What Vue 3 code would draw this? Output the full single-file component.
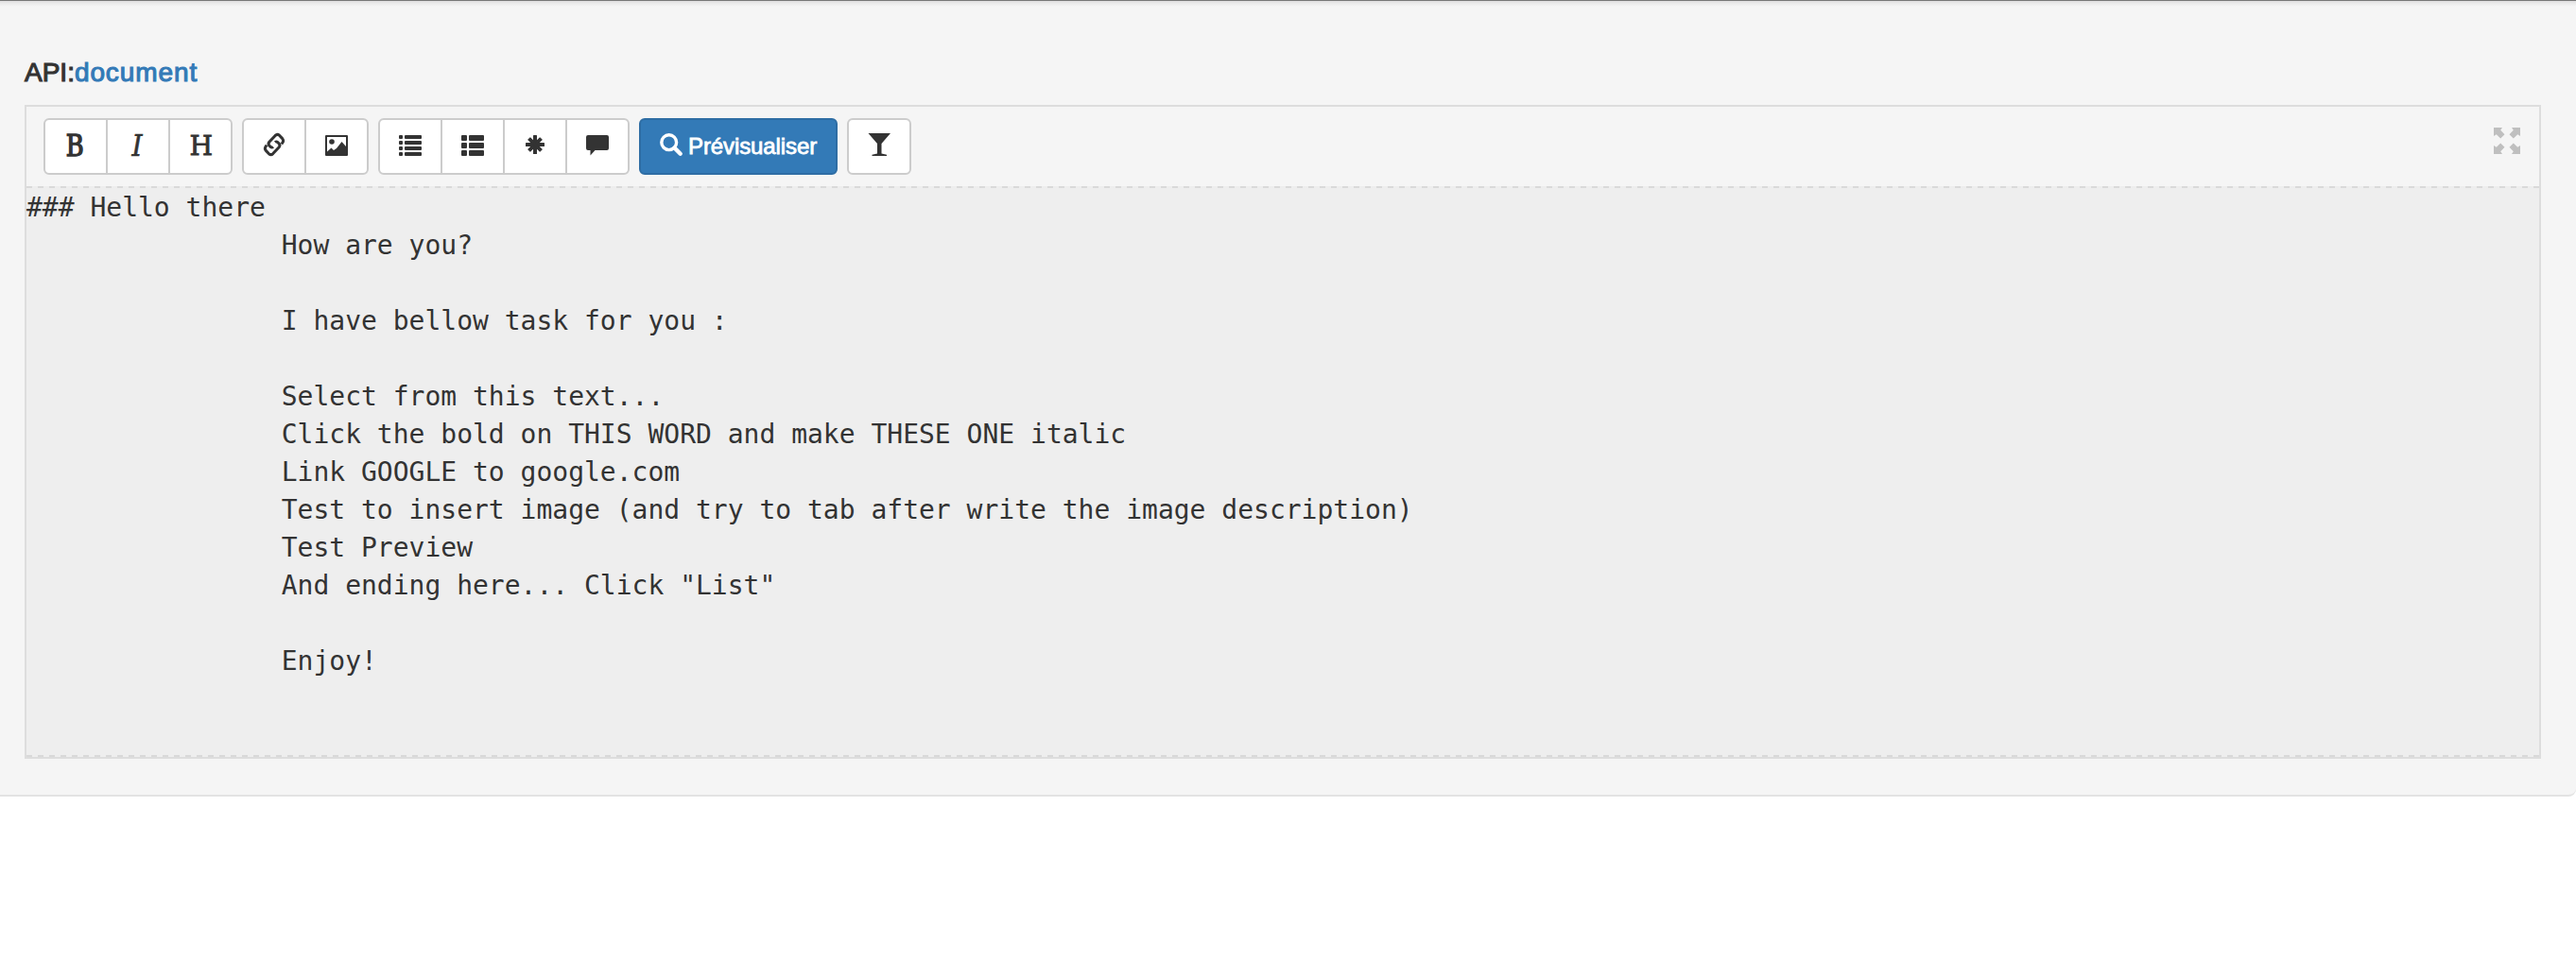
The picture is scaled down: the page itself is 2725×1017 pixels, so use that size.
<script setup>
const groups = [
  ['bold', 'italic', 'header'],
  ['link', 'picture'],
  ['list', 'thlist', 'asterisk', 'comment'],
]
const letters = { bold: 'B', italic: 'I', header: 'H' }
const pad = ' '.repeat(16)
const content = [
  '### Hello there',
  pad + 'How are you?',
  '',
  pad + 'I have bellow task for you :',
  '',
  pad + 'Select from this text...',
  pad + 'Click the bold on THIS WORD and make THESE ONE italic',
  pad + 'Link GOOGLE to google.com',
  pad + 'Test to insert image (and try to tab after write the image description)',
  pad + 'Test Preview',
  pad + 'And ending here... Click "List"',
  '',
  pad + 'Enjoy!',
].join('\n')
</script>

<template>
  <main class="well">
    <div class="label"><span class="api">API:</span><a class="doc">document</a></div>
    <section class="editor">
      <header class="toolbar">
        <div v-for="(group, i) in groups" :key="i" class="group">
          <button v-for="name in group" :key="name" class="btn">
            <span v-if="letters[name]" class="icon letter" :class="name"><span>{{ letters[name] }}</span></span>
            <svg v-else class="icon" viewBox="0 0 24 24">
              <g v-if="name === 'link'" fill="none" stroke="currentColor" stroke-width="3" stroke-linejoin="round">
                <path d="M19.800 11.400L21 9.800Q22.400 7.600 20.700 5.600L17.500 2.200Q15.300 .400 13.200 2.400L6.800 9.300Q5.200 11.300 6.900 13.100L8.300 14.500Q9.700 15.500 11 14.300" />
                <path d="M4.200 12.600L3 14.200Q1.600 16.400 3.300 18.400L6.500 21.800Q8.700 23.600 10.800 21.600L17.200 14.700Q18.800 12.700 17.100 10.900L15.700 9.500Q14.300 8.500 13 9.700" />
              </g>
              <g v-else-if="name === 'picture'">
                <path fill-rule="evenodd" d="M1 2H23Q24 2 24 3V23Q24 24 23 24H1Q0 24 0 23V3Q0 2 1 2ZM2 4V19.500L6.500 15.500L9 18L12 16L17.500 9L22 14V4Z" />
                <circle cx="7" cy="9" r="2.800" />
              </g>
              <g v-else-if="name === 'list'">
                <template v-for="y in [2, 8, 14, 20]" :key="y">
                  <rect x="0" :y="y" width="4" height="4" rx="1" />
                  <rect x="6" :y="y" width="18" height="4" rx="1" />
                </template>
              </g>
              <g v-else-if="name === 'thlist'">
                <template v-for="y in [2, 10, 18]" :key="y">
                  <rect x="0" :y="y" width="6" height="6" rx="1" />
                  <rect x="8" :y="y" width="16" height="6" rx="1" />
                </template>
              </g>
              <g v-else-if="name === 'asterisk'">
                <rect v-for="a in [0, 45, 90, 135]" :key="a" x="10" :y="a % 90 ? 2.800 : 2" width="4" :height="a % 90 ? 18.400 : 20" rx=".5" :transform="`rotate(${a} 12 12)`" />
              </g>
              <path v-else d="M2 2H22Q24 2 24 4V16Q24 18 22 18H9.500L4.500 23.500V18H2Q0 18 0 16V4Q0 2 2 2Z" />
            </svg>
          </button>
        </div>
        <button class="btn primary">
          <svg class="icon" viewBox="0 0 24 24">
            <circle cx="9.700" cy="9.700" r="7.900" fill="none" stroke="currentColor" stroke-width="3.400" />
            <path d="M15.500 15.500L21.700 21.700" stroke="currentColor" stroke-width="4.400" stroke-linecap="round" />
          </svg>
          <span class="preview">Prévisualiser</span>
        </button>
        <button class="btn">
          <svg class="icon" viewBox="0 0 24 24">
            <path d="M.500 0H24L14.500 11V21.500L20 22.800V24H4.500V22.800L10 21.500V11Z" />
          </svg>
        </button>
        <svg class="fullscreen" viewBox="0 0 28 28">
          <path v-for="a in [0, 90, 180, 270]" :key="a" d="M0 0H9L7.200 2.800L11.500 7.200L7.200 11.500L2.800 7.200L0 9Z" :transform="`rotate(${a} 14 14)`" />
        </svg>
      </header>
      <pre class="text">{{ content }}</pre>
    </section>
  </main>
</template>

<style>
body {
  background: #fff;
}
</style>

<style scoped>
.well {
  box-sizing: border-box;
  height: 843px;
  padding: 0 37px 0 26px;
  border-top: 1px solid #777;
  border-bottom: 2px solid #e3e3e3;
  border-radius: 0 0 8px 0;
  background: linear-gradient(#e0dfe0, #ececec 3px, #f5f5f5 6px) #f5f5f5;
  color: #333;
  font-family: "Liberation Sans", Arial, sans-serif;
}
.label {
  height: 110px;
  box-sizing: border-box;
  padding-top: 56px;
  font-size: 28px;
  line-height: 40px;
  white-space: nowrap;
  -webkit-text-stroke: 1.1px currentColor;
}
.doc {
  color: #337ab7;
  letter-spacing: 0.9px;
}
.editor {
  box-sizing: border-box;
  height: 692px;
  border: 2px solid #ddd;
}
.toolbar {
  display: flex;
  align-items: flex-start;
  gap: 10px;
  height: 86px;
  box-sizing: border-box;
  padding: 12px 20px 0 18px;
  background: repeating-linear-gradient(90deg, #d9d9d9 0 6px, #ededed 6px 12px) bottom / 100% 2px no-repeat, #f5f5f5;
}
.group {
  display: flex;
}
.btn {
  display: flex;
  align-items: center;
  box-sizing: border-box;
  height: 60px;
  margin: 0;
  padding: 0 20px;
  border: 2px solid #ccc;
  border-radius: 6px;
  background: #fff;
  color: #333;
  font: 24px/36px "Liberation Sans", Arial, sans-serif;
}
.group .btn {
  border-radius: 0;
}
.group .btn + .btn {
  margin-left: -2px;
}
.group .btn:first-child {
  border-radius: 6px 0 0 6px;
}
.group .btn:last-child {
  border-radius: 0 6px 6px 0;
}
.icon {
  display: block;
  flex: none;
  width: 24px;
  height: 24px;
  margin-top: -4px;
  fill: currentColor;
  overflow: visible;
}
.letter {
  display: flex;
  align-items: center;
  justify-content: center;
  font-family: "DejaVu Serif Condensed", "DejaVu Serif", serif;
  font-stretch: condensed;
  font-size: 31px;
  line-height: 24px;
}
.bold span {
  transform: translate(-1px, 0.5px) scaleX(0.92);
  -webkit-text-stroke: 1.4px currentColor;
}
.italic span {
  font-style: italic;
  transform: translate(-1px, 0.5px);
  -webkit-text-stroke: 0.6px currentColor;
}
.header span {
  font-size: 28.5px;
  transform: translate(0.5px, 1.5px) scaleX(1.1);
  -webkit-text-stroke: 0.8px currentColor;
}
.primary {
  width: 210px;
  border-color: #2e6da4;
  background: #337ab7;
  color: #fff;
}
.preview {
  margin-left: 6px;
  white-space: nowrap;
  letter-spacing: -0.1px;
  -webkit-text-stroke: 0.8px currentColor;
}
.fullscreen {
  width: 28px;
  height: 28px;
  margin: 10px 0 0 auto;
  fill: #bfbfbf;
}
.text {
  box-sizing: border-box;
  height: 602px;
  margin: 0;
  padding-top: 1px;
  background: repeating-linear-gradient(90deg, #d9d9d9 0 6px, transparent 6px 12px) bottom / 100% 2px no-repeat, #eee;
  font: 28px/40px "DejaVu Sans Mono", monospace;
}
</style>
